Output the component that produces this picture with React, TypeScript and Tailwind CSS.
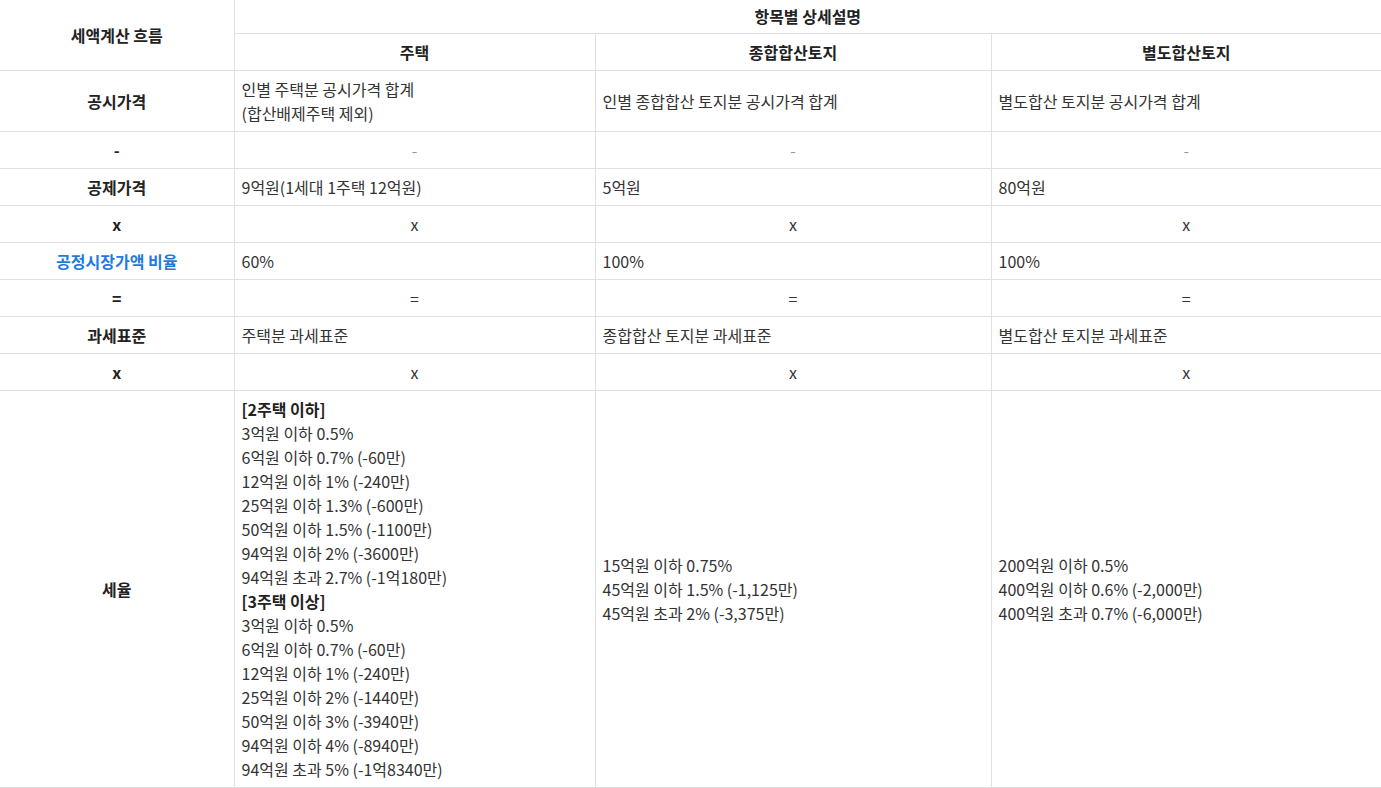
import React from "react";

const font = { fontFamily: '"Noto Sans CJK KR", "Noto Sans", sans-serif' };

const th = "border border-[#dfe0e5] px-2 font-bold text-[#222] text-center";
const tdHead = "border-b border-r border-[#dfe0e5] px-2 py-1.5 font-bold text-[#222] text-center";
const td = "border-b border-r border-[#dfe0e5] px-[7px] py-1.5 text-[#333] text-left align-middle";
const tdLast = "border-b border-[#dfe0e5] px-[7px] py-1.5 text-[#333] text-left align-middle";
const tdC = "border-b border-r border-[#dfe0e5] px-2 py-1.5 text-[#333] text-center";
const tdCLast = "border-b border-[#dfe0e5] px-2 py-1.5 text-[#333] text-center";

const house2 = [
  "3억원 이하 0.5%",
  "6억원 이하 0.7% (-60만)",
  "12억원 이하 1% (-240만)",
  "25억원 이하 1.3% (-600만)",
  "50억원 이하 1.5% (-1100만)",
  "94억원 이하 2% (-3600만)",
  "94억원 초과 2.7% (-1억180만)",
];

const house3 = [
  "3억원 이하 0.5%",
  "6억원 이하 0.7% (-60만)",
  "12억원 이하 1% (-240만)",
  "25억원 이하 2% (-1440만)",
  "50억원 이하 3% (-3940만)",
  "94억원 이하 4% (-8940만)",
  "94억원 초과 5% (-1억8340만)",
];

const SymbolRow = ({ label, sym, muted }: { label: string; sym: string; muted?: boolean }) => (
  <tr>
    <td className={tdHead}>{label}</td>
    <td className={`${tdC} ${muted ? "text-[#999]" : ""}`}>{sym}</td>
    <td className={`${tdC} ${muted ? "text-[#999]" : ""}`}>{sym}</td>
    <td className={`${tdCLast} ${muted ? "text-[#999]" : ""}`}>{sym}</td>
  </tr>
);

const App = () => {
  return (
    <div className="w-[1381px] bg-white" style={font}>
      <table className="w-full table-fixed border-collapse text-[16px] leading-6">
        <colgroup>
          <col className="w-[234px]" />
          <col className="w-[361px]" />
          <col className="w-[396px]" />
          <col className="w-[390px]" />
        </colgroup>
        <thead>
          <tr className="h-[33px]">
            <th rowSpan={2} className="border-b border-r border-[#dfe0e5] px-2 font-bold text-[#222] text-center">
              세액계산 흐름
            </th>
            <th colSpan={3} className="border-b border-[#dfe0e5] px-2 font-bold text-[#222] text-center">
              항목별 상세설명
            </th>
          </tr>
          <tr className="h-[37px]">
            <th className={`${th} border-t-0 border-l-0`}>주택</th>
            <th className={`${th} border-t-0`}>종합합산토지</th>
            <th className={`${th} border-t-0 border-r-0`}>별도합산토지</th>
          </tr>
        </thead>
        <tbody>
          <tr>
            <td className={tdHead}>공시가격</td>
            <td className={td}>
              인별 주택분 공시가격 합계
              <br />
              (합산배제주택 제외)
            </td>
            <td className={td}>인별 종합합산 토지분 공시가격 합계</td>
            <td className={tdLast}>별도합산 토지분 공시가격 합계</td>
          </tr>
          <SymbolRow label="-" sym="-" muted />
          <tr>
            <td className={tdHead}>공제가격</td>
            <td className={td}>9억원(1세대 1주택 12억원)</td>
            <td className={td}>5억원</td>
            <td className={tdLast}>80억원</td>
          </tr>
          <SymbolRow label="x" sym="x" />
          <tr>
            <td className={`${tdHead} !text-[#1f7ae0]`}>공정시장가액 비율</td>
            <td className={td}>60%</td>
            <td className={td}>100%</td>
            <td className={tdLast}>100%</td>
          </tr>
          <SymbolRow label="=" sym="=" />
          <tr>
            <td className={tdHead}>과세표준</td>
            <td className={td}>주택분 과세표준</td>
            <td className={td}>종합합산 토지분 과세표준</td>
            <td className={tdLast}>별도합산 토지분 과세표준</td>
          </tr>
          <SymbolRow label="x" sym="x" />
          <tr>
            <td className={tdHead}>세율</td>
            <td className={td}>
              <div className="font-bold text-[#222]">[2주택 이하]</div>
              {house2.map((l, i) => (
                <div key={"a" + i}>{l}</div>
              ))}
              <div className="font-bold text-[#222]">[3주택 이상]</div>
              {house3.map((l, i) => (
                <div key={"b" + i}>{l}</div>
              ))}
            </td>
            <td className={td}>
              <div>15억원 이하 0.75%</div>
              <div>45억원 이하 1.5% (-1,125만)</div>
              <div>45억원 초과 2% (-3,375만)</div>
            </td>
            <td className={tdLast}>
              <div>200억원 이하 0.5%</div>
              <div>400억원 이하 0.6% (-2,000만)</div>
              <div>400억원 초과 0.7% (-6,000만)</div>
            </td>
          </tr>
        </tbody>
      </table>
    </div>
  );
};

export default App;
